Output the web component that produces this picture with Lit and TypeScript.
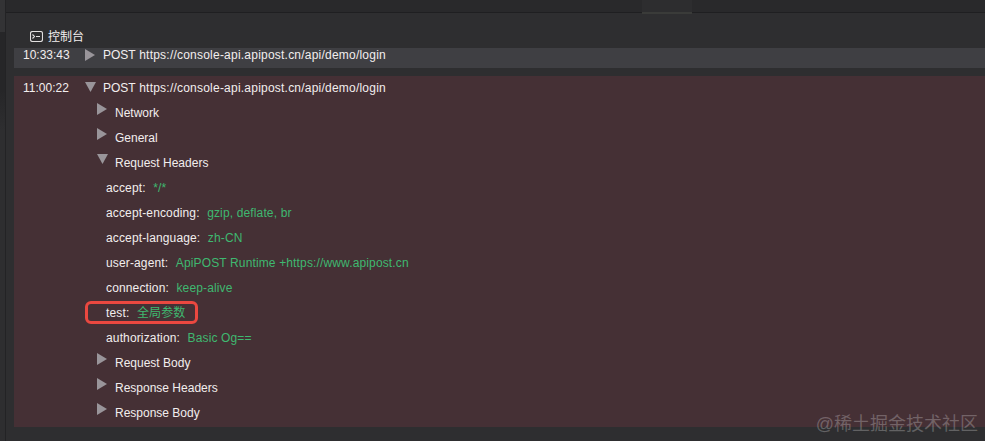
import { LitElement, html, css, svg } from "lit";
import { customElement } from "lit/decorators.js";

const right = svg`<svg class="tri" width="10" height="12" viewBox="0 0 10 12"><path d="M0 0L10 6L0 12Z" fill="#99959a"/></svg>`;
const down = svg`<svg class="tri open" width="11" height="10" viewBox="0 0 11 10"><path d="M0 0H11L5.5 10Z" fill="#99959a"/></svg>`;

const headers: [string, string][] = [
  ["accept", "*/*"],
  ["accept-encoding", "gzip, deflate, br"],
  ["accept-language", "zh-CN"],
  ["user-agent", "ApiPOST Runtime +https://www.apipost.cn"],
  ["connection", "keep-alive"],
  ["test", "全局参数"],
  ["authorization", "Basic Og=="],
];

@customElement("app-root")
export class AppRoot extends LitElement {
  static styles = css`
    :host {
      display: flex;
      position: relative;
      width: 985px;
      height: 441px;
      overflow: hidden;
      background: #2e2e30;
      color: #f2eeee;
      font: 12px/25px "Liberation Sans", "Noto Sans CJK SC", sans-serif;
    }
    .side {
      flex: none;
      width: 5px;
      background: linear-gradient(#333335 0 32px, #262628 32px 90px, #2e2e30 130px);
      border-right: 1px solid #232325;
    }
    .main {
      flex: 1;
      min-width: 0;
    }
    .top {
      height: 12px;
      background: #29292b;
      border-bottom: 1px solid #1f1f21;
      display: flex;
      justify-content: center;
    }
    .handle {
      width: 50px;
      height: 12px;
      margin-left: 343px;
      border-bottom: 2px solid #3a3b39;
      background: #2d2d2f;
    }
    .title {
      height: 35px;
      box-sizing: border-box;
      padding: 12px 0 0 24px;
      display: flex;
      align-items: center;
      gap: 5px;
      line-height: 14px;
    }
    .log {
      margin-left: 8px;
      padding-left: 9px;
      display: grid;
      grid-template-columns: 62px 18px 1fr;
      align-items: center;
    }
    .first {
      height: 20px;
      line-height: 14px;
      background: #3f3f43;
      margin-bottom: 8px;
      align-items: start;
    }
    .second {
      height: 351px;
      box-sizing: border-box;
      background: #453035;
      grid-template-rows: 24px 1fr;
    }
    .first .tri {
      margin-top: 1px;
    }
    .second > .tri {
      margin-top: -2px;
    }
    .url {
      letter-spacing: 0.22px;
      word-spacing: -1px;
    }
    .url b {
      font-weight: 400;
      letter-spacing: 0;
      margin-right: 1px;
    }
    .tree {
      grid-column: 2 / 4;
      align-self: start;
      padding-left: 12px;
      margin-top: 1px;
    }
    .row {
      height: 25px;
      display: flex;
      align-items: center;
    }
    .row .tri {
      margin-top: -9px;
    }
    .row .name {
      margin-left: 8px;
    }
    .row .open + .name {
      margin-left: 7px;
    }
    .row .open {
      margin-top: -9px;
    }
    .hd {
      height: 25px;
      padding-left: 9px;
      position: relative;
      display: flex;
      gap: 7.5px;
      letter-spacing: 0.14px;
    }
    .val {
      color: #3fb870;
    }
    .mark {
      position: absolute;
      left: -12px;
      top: 0;
      width: 113px;
      height: 23px;
      box-sizing: border-box;
      border: 3px solid #ea4840;
      border-radius: 6px;
    }
    .wm {
      position: absolute;
      right: 7px;
      top: 414px;
      font-size: 18px;
      line-height: 20px;
      color: rgba(255, 255, 255, 0.25);
    }
  `;

  render() {
    const sec = (n: string, open = false) => html`<div class="row">
      ${open ? down : right}<span class="name">${n}</span>
    </div>`;
    const url = html`<span class="url"><b>POST</b> https://console-api.apipost.cn/api/demo/login</span>`;
    return html`
      <div class="side"></div>
      <div class="main">
        <div class="top"><div class="handle"></div></div>
        <div class="title">
          <svg width="13" height="11" viewBox="0 0 13 11" fill="none" stroke="#e2e0e0" stroke-width="1.1">
            <rect x=".5" y=".5" width="12" height="10" rx="2" />
            <path d="M2.5 3.5L4.5 5.5L2.5 7.5M6 5.5H10" />
          </svg>
          <span>控制台</span>
        </div>
        <div class="log first"><span>10:33:43</span>${right}${url}</div>
        <div class="log second">
          <span>11:00:22</span>${down}${url}
          <div class="tree">
            ${sec("Network")} ${sec("General")} ${sec("Request Headers", true)}
            ${headers.map(
              ([k, v]) => html`<div class="hd">
                ${k === "test" ? html`<div class="mark"></div>` : ""}
                <span>${k}:</span><span class="val">${v}</span>
              </div>`
            )}
            ${sec("Request Body")} ${sec("Response Headers")} ${sec("Response Body")}
          </div>
        </div>
      </div>
      <div class="wm">@稀土掘金技术社区</div>
    `;
  }
}
